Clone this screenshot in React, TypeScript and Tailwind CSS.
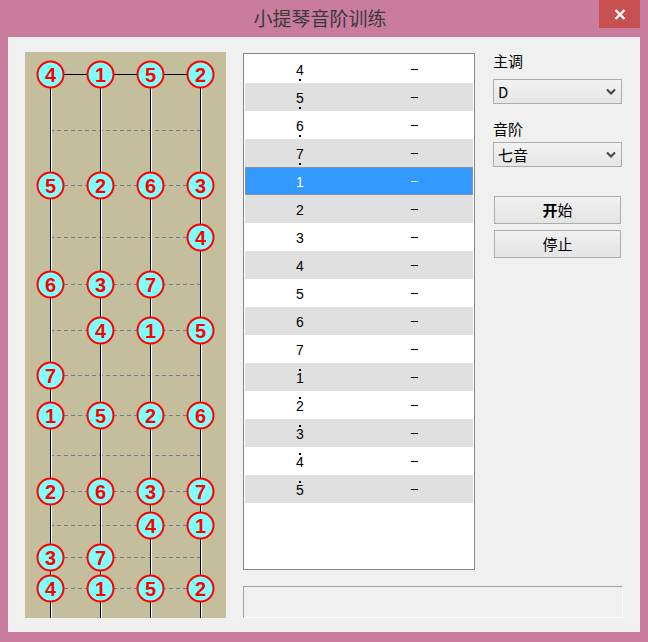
import React from "react";

const STRINGS = [25, 75, 125, 175];
const ROWS: { y: number; notes: (number | null)[] }[] = [
  { y: 22, notes: [4, 1, 5, 2] },
  { y: 78, notes: [null, null, null, null] },
  { y: 133, notes: [5, 2, 6, 3] },
  { y: 185, notes: [null, null, null, 4] },
  { y: 232, notes: [6, 3, 7, null] },
  { y: 278, notes: [null, 4, 1, 5] },
  { y: 323, notes: [7, null, null, null] },
  { y: 363, notes: [1, 5, 2, 6] },
  { y: 403, notes: [null, null, null, null] },
  { y: 439, notes: [2, 6, 3, 7] },
  { y: 473, notes: [null, null, 4, 1] },
  { y: 505, notes: [3, 7, null, null] },
  { y: 536, notes: [4, 1, 5, 2] },
];

function Fingerboard() {
  return (
    <div className="w-[201px] h-[566px] bg-[#c4be9c]">
      <svg width="201" height="566" viewBox="0 0 201 566">
        {ROWS.slice(1).map((r) => (
          <line
            key={"d" + r.y}
            x1={25}
            x2={175}
            y1={r.y + 0.5}
            y2={r.y + 0.5}
            stroke="#6f7d98"
            strokeWidth={1}
            strokeDasharray="4 3"
            shapeRendering="crispEdges"
          />
        ))}
        <line x1={25} x2={176} y1={22.5} y2={22.5} stroke="#000" strokeWidth={1} shapeRendering="crispEdges" />
        {STRINGS.map((s) => (
          <g key={"s" + s}>
            <line x1={s + 0.5} x2={s + 0.5} y1={22} y2={566} stroke="#000" strokeWidth={1} shapeRendering="crispEdges" />
            <line x1={s + 1.5} x2={s + 1.5} y1={23} y2={566} stroke="#fff" strokeWidth={1} shapeRendering="crispEdges" />
          </g>
        ))}
        {ROWS.map((r) =>
          r.notes.map((n, i) =>
            n === null ? null : (
              <g key={r.y + "-" + i}>
                <circle cx={STRINGS[i] + 0.5} cy={r.y + 0.5} r={13} fill="#80ffff" stroke="#ff0000" strokeWidth={2} />
                <text
                  x={STRINGS[i] + 0.5}
                  y={r.y + 8}
                  textAnchor="middle"
                  fontFamily="'Liberation Sans', Arial, sans-serif"
                  fontWeight="bold"
                  fontSize="20"
                  fill="#ff0000"
                >
                  {n}
                </text>
              </g>
            )
          )
        )}
      </svg>
    </div>
  );
}

const LIST: { d: string; dot: "above" | "below" | "none" }[] = [
  { d: "4", dot: "below" },
  { d: "5", dot: "below" },
  { d: "6", dot: "below" },
  { d: "7", dot: "below" },
  { d: "1", dot: "none" },
  { d: "2", dot: "none" },
  { d: "3", dot: "none" },
  { d: "4", dot: "none" },
  { d: "5", dot: "none" },
  { d: "6", dot: "none" },
  { d: "7", dot: "none" },
  { d: "1", dot: "above" },
  { d: "2", dot: "above" },
  { d: "3", dot: "above" },
  { d: "4", dot: "above" },
  { d: "5", dot: "above" },
];

function NoteList() {
  return (
    <div className="w-[232px] h-[517px] border border-[#828790] bg-white p-[1px] flex flex-col">
      {LIST.map((item, i) => {
        const selected = i === 4;
        const bg = selected ? "bg-[#3399ff] text-white" : i % 2 === 1 ? "bg-[#e0e0e0] text-black" : "bg-white text-black";
        const dotColor = selected ? "bg-white" : "bg-black";
        return (
          <div
            key={i}
            className={
              "h-[28px] shrink-0 grid grid-cols-[110px_110px] gap-x-[4px] " +
              bg +
              (selected ? " outline-1 outline-dotted outline-[#d08a4a] -outline-offset-1" : "")
            }
          >
            <div className="flex flex-col items-center pt-[6px]">
              <div className={"w-[2px] h-[2px] " + (item.dot === "above" ? dotColor : "")} />
              <div className="h-[14px] leading-[14px] text-[14px] font-['Liberation_Sans',Arial,sans-serif]">{item.d}</div>
              <div className={"mt-[2px] w-[2px] h-[2px] " + (item.dot === "below" ? dotColor : "")} />
            </div>
            <div className="flex items-center justify-center">
              <div className={"w-[7px] h-[1px] mt-[1px] " + (selected ? "bg-white" : "bg-black")} />
            </div>
          </div>
        );
      })}
    </div>
  );
}

function Chevron() {
  return (
    <svg width="10" height="7" viewBox="0 0 10 7">
      <path d="M1 1.5 L5 5.5 L9 1.5" fill="none" stroke="#444" strokeWidth="2" />
    </svg>
  );
}

function Select({ value }: { value: string }) {
  return (
    <div className="w-[129px] h-[25px] border border-[#acacac] bg-gradient-to-b from-[#f2f2f2] to-[#e6e6e6] flex items-center justify-between pl-[4px] pr-[5px]">
      <span className="text-[15px] leading-[20px] text-black">{value}</span>
      <Chevron />
    </div>
  );
}

function Button({ children }: { children: React.ReactNode }) {
  return (
    <div className="ml-[1px] w-[127px] h-[28px] border border-[#acacac] bg-gradient-to-b from-[#f0f0f0] to-[#e4e4e4] flex items-center justify-center text-[15px] leading-[20px] text-black">
      {children}
    </div>
  );
}

export default function App() {
  return (
    <div className="w-[648px] h-[642px] bg-[#c97c9c] flex flex-col font-['Noto_Sans_CJK_SC','Noto_Sans',sans-serif]">
      <div className="h-[37px] flex items-start">
        <div className="w-[41px]" />
        <div className="flex-1 flex justify-center pt-[5px]">
          <span className="text-[19px] leading-[26px] text-[#3a3a3a]">小提琴音阶训练</span>
        </div>
        <div className="w-[41px] h-[28px] bg-[#c75050] flex items-center justify-center mr-[8px]">
          <svg width="12" height="11" viewBox="0 0 12 11">
            <path d="M1.5 1 L10.5 10 M10.5 1 L1.5 10" stroke="#fff" strokeWidth="2.4" />
          </svg>
        </div>
      </div>
      <div className="mx-[8px] w-[632px] h-[595px] bg-[#f0f0f0] flex pl-[17px] pt-[15px]">
        <Fingerboard />
        <div className="ml-[17px] flex flex-col">
          <div className="flex pt-[1px]">
            <NoteList />
            <div className="ml-[18px] flex flex-col">
              <div className="text-[15px] leading-[16px] text-black">主调</div>
              <div className="mt-[10px]">
                <Select value="D" />
              </div>
              <div className="mt-[17px] text-[15px] leading-[16px] text-black">音阶</div>
              <div className="mt-[5px]">
                <Select value="七音" />
              </div>
              <div className="mt-[29px]">
                <Button>
                  <span className="font-bold">开</span>
                  <span>始</span>
                </Button>
              </div>
              <div className="mt-[6px]">
                <Button>停止</Button>
              </div>
            </div>
          </div>
          <div className="mt-[16px] w-[380px] h-[32px] border-t border-l border-[#a0a0a0] border-b-white border-r-white border-b border-r" />
        </div>
      </div>
    </div>
  );
}
